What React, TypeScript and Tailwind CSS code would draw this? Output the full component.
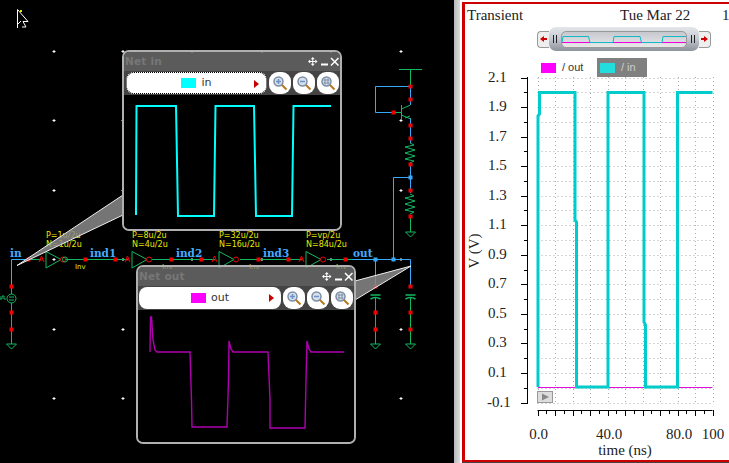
import React from 'react';

const GREEN = '#10b860';
const BLUE = '#38a8f8';
const RED = '#f00000';

const gridX = [54, 123, 192, 262, 331, 401];
const gridY = [51, 120, 190, 259, 329, 398];

const redSquares: [number, number][] = [
  [28, 259], [85, 259], [115, 259], [171, 259], [201, 259], [258, 259], [288, 259], [345, 259],
  [11, 286], [11, 312], [11, 329],
  [375, 312], [375, 329], [375, 286], [410, 286], [410, 312], [410, 329],
  [410, 86], [410, 99], [393, 112], [410, 125], [410, 138], [410, 164], [410, 190], [410, 216],
];

const Ground = ({ x, y }: { x: number; y: number }) => (
  <polygon points={`${x - 5},${y} ${x + 5},${y} ${x},${y + 5}`} fill="none" stroke={GREEN} />
);

const Resistor = ({ x, y }: { x: number; y: number }) => (
  <polyline
    points={`${x},${y} ${x + 4},${y + 2} ${x - 5},${y + 4} ${x + 5},${y + 7} ${x - 5},${y + 10} ${x + 5},${y + 13} ${x - 5},${y + 16} ${x + 4},${y + 18} ${x},${y + 20}`}
    fill="none"
    stroke={GREEN}
  />
);

const Cap = ({ x, y }: { x: number; y: number }) => (
  <g fill="none" stroke={GREEN}>
    <path d={`M${x - 5} ${y}h10`} strokeWidth={1.5} />
    <path d={`M${x - 5} ${y + 4}q5 -3 10 0`} strokeWidth={1.5} />
  </g>
);

const Inverter = ({ x, p, n, inv }: { x: number; p: string; n: string; inv: number }) => (
  <g>
    <polygon points={`${x},${251.5} ${x},${268} ${x + 15},${259.5}`} fill="none" stroke={GREEN} />
    <circle cx={x + 17} cy={259.5} r={2.5} fill="none" stroke={RED} />
    <path d={`M${x - 7} 262l2.5 -6l2.5 6M${x - 6} 260h3`} stroke={RED} fill="none" />
    <text x={x} y={238} fontSize={8} fill="#e8e800" fontFamily="'DejaVu Sans', sans-serif">{p}</text>
    <text x={x} y={247} fontSize={8} fill="#e8e800" fontFamily="'DejaVu Sans', sans-serif">{n}</text>
    <text x={inv} y={269} fontSize={7} fill="#e8e800" fontFamily="'DejaVu Sans', sans-serif">Inv</text>
  </g>
);

const NetLabel = ({ x, children }: { x: number; children: string }) => (
  <text x={x} y={257} fontSize={10.5} fontWeight={700} fill="#44aaff" fontFamily="'DejaVu Serif', serif">
    {children}
  </text>
);

const Schematic = () => (
  <svg className="absolute inset-0" width={454} height={463} viewBox="0 0 454 463">
    {gridX.flatMap((x) =>
      gridY.map((y) => (
        <path key={`${x}-${y}`} d={`M${x - 1.5} ${y + 0.5}h3M${x} ${y - 1}v3`} stroke="#fff" strokeWidth={1} />
      )),
    )}

    {/* wires */}
    <path d="M11.5 259.5H28V259.5M11.5 259.5V286" stroke={BLUE} fill="none" />
    <path d="M28 259.5H41M65 259.5H128M152 259.5H215M240 259.5H302M327 259.5H352" stroke={GREEN} fill="none" />
    <path d="M352 259.5H410.5V286M375.5 259.5V286M393.5 259.5V177.5H410.5" stroke={BLUE} fill="none" />
    <path d="M11.5 286V344M375.5 298V344M410.5 298V344M410.5 69V86" stroke={GREEN} fill="none" />
    <path d="M399 69.5H422" stroke={GREEN} strokeWidth={1} />
    <path d="M375.5 112.5V86.5H410.5V105M375.5 112.5H393M410.5 118V143M410.5 162V193" stroke={BLUE} fill="none" />
    <path d="M393 112.5H401.5M401.5 105V119M401.5 109L410.5 105M401.5 115L410.5 119M405 118L410 116" stroke={GREEN} fill="none" />

    <Resistor x={410} y={143} />
    <Resistor x={410} y={194} />
    <path d="M410.5 216V232" stroke={GREEN} />
    <Ground x={410.5} y={232} />
    <Ground x={11.5} y={344} />
    <Ground x={375.5} y={344} />
    <Ground x={410.5} y={344} />
    <Cap x={375.5} y={295} />
    <Cap x={410.5} y={295} />

    {/* source */}
    <circle cx={11.5} cy={298.5} r={4.5} fill="#000" stroke={GREEN} />
    <path d="M9 297h5M9 300h5M0 296v3h2v-3h2v3h2" stroke={GREEN} fill="none" />

    <Inverter x={46} p="P=1u/2u" n="N=1u/2u" inv={75} />
    <Inverter x={132} p="P=8u/2u" n="N=4u/2u" inv={162} />
    <Inverter x={219} p="P=32u/2u" n="N=16u/2u" inv={249} />
    <Inverter x={306} p="P=vp/2u" n="N=84u/2u" inv={336} />
    <circle cx={65} cy={259.5} r={2.5} fill="none" stroke={GREEN} />

    <NetLabel x={10}>in</NetLabel>
    <NetLabel x={90}>ind1</NetLabel>
    <NetLabel x={176}>ind2</NetLabel>
    <NetLabel x={263}>ind3</NetLabel>
    <NetLabel x={353}>out</NetLabel>

    {redSquares.map(([x, y]) => (
      <rect key={`${x}-${y}`} x={x - 1.5} y={y - 1.5} width={4} height={4} fill={RED} />
    ))}
    <rect x={373.5} y={257.5} width={4} height={4} fill={BLUE} />
    <rect x={391.5} y={257.5} width={4} height={4} fill={BLUE} />
    <rect x={408.5} y={175.5} width={4} height={4} fill={BLUE} />

    {/* callouts */}
    <polygon points="17,265.5 123,195 123,215" fill="#8a8a8a" fillOpacity={0.85} stroke="#eee" />
    <polygon points="411,266 355,281 355,300" fill="#8a8a8a" fillOpacity={0.85} stroke="#eee" />

    {/* pointer */}
    <path d="M17.5 9.5V28M17.5 9.5L28 21.5H23L26 27H22M18 24L21 21" stroke="#fff" fill="none" />
    <rect x={20} y={10} width={2} height={2} fill="#e8e800" />
  </svg>
);

const Magnifier = ({ kind }: { kind: 'in' | 'out' | 'fit' }) => (
  <svg width={16} height={16} viewBox="0 0 16 16">
    <path d="M9.500 9.500L14.500 14.500" stroke="#b5791e" strokeWidth={2} />
    <circle cx={6.5} cy={6.5} r={4.5} fill="#d6e0ec" stroke="#7d8ea4" strokeWidth={1.5} />
    {kind !== 'fit' && <path d="M4 6.500h5" stroke="#6f93c6" strokeWidth={1.6} />}
    {kind === 'in' && <path d="M6.500 4v5" stroke="#6f93c6" strokeWidth={1.6} />}
    {kind === 'fit' && <path d="M3.500 5h6M3.500 8h6M5 3.500v6M8 3.500v6" stroke="#7d8ea4" strokeWidth={1} />}
  </svg>
);

const WindowControls = () => (
  <svg width={31} height={10} viewBox="0 0 31 10">
    <path
      d="M4.750 0l2 2.200h-4zM4.750 9l2-2.200h-4zM0 4.500l2.200-2v4zM9.500 4.500l-2.200-2v4z"
      fill="#fff"
    />
    <path d="M2 4.500h5.500M4.750 2v5" stroke="#fff" />
    <path d="M13 7.500h7" stroke="#fff" strokeWidth={2} />
    <path d="M23 1l7.500 7.500M30.500 1L23 8.500" stroke="#fff" strokeWidth={1.500} />
  </svg>
);

interface NetWindowProps {
  title: string;
  label: string;
  className: string;
  swatch: string;
  pill: string;
  toolbar: string;
  titleBar: string;
  viewBox: string;
  plotWidth: number;
  plotHeight: number;
  children: React.ReactNode;
}

const NetWindow = ({ title, label, className, swatch, pill, toolbar, titleBar, viewBox, plotWidth, plotHeight, children }: NetWindowProps) => (
  <div className={`absolute flex w-[220px] flex-col overflow-hidden rounded-[7px] border-2 border-[#b0b0b0] ${className}`}>
    <div className={`flex shrink-0 items-center justify-between bg-[#767676]/[.77] pl-px pr-[1px] ${titleBar}`}>
      <span className="font-['DejaVu_Sans',sans-serif] text-[10.500px] font-bold text-[#777] tracking-[0.2px]">{title}</span>
      <WindowControls />
    </div>
    <div className={`flex h-[24px] shrink-0 items-center bg-[#444] ${toolbar}`}>
      <div className={`relative flex h-[22px] items-center justify-center gap-[5px] rounded-[8px] bg-white ${pill}`}>
        <span className={`h-[10px] w-[15px] ${swatch}`} />
        <span className="font-['DejaVu_Sans',sans-serif] text-[11px] text-[#333]">{label}</span>
        <svg className="absolute right-[7px] top-[7px]" width={5} height={8} viewBox="0 0 5 8">
          <polygon points="0,0 5,4 0,8" fill="#c80000" />
        </svg>
      </div>
      {(['in', 'out', 'fit'] as const).map((kind) => (
        <div key={kind} className="flex h-[22px] w-[22px] items-center justify-center rounded-[9px] bg-white">
          <Magnifier kind={kind} />
        </div>
      ))}
    </div>
    <div className="flex-1 bg-black">
      <svg width={plotWidth} height={plotHeight} viewBox={viewBox}>
        {children}
      </svg>
    </div>
  </div>
);

const yLabels = ['2.1', '1.9', '1.7', '1.5', '1.3', '1.1', '0.9', '0.7', '0.5', '0.3', '0.1', '-0.1'];
const serif = "'Liberation Serif', serif";

const Chart = () => {
  const y0 = 77.5;
  const step = 29.55;
  const hLines = Array.from({ length: 23 }, (_, i) => y0 + (i * step) / 2);
  const vLines = Array.from({ length: 21 }, (_, i) => 537.5 + i * 8.75);
  return (
    <svg className="overflow-visible" width={264} height={382} viewBox="465 77 264 382">
      {/* grid */}
      {hLines.map((y, i) => (
        <path key={i} d={`M537.5 ${Math.round(y) + 0.5}H712.5`} stroke="#aaa" strokeDasharray="1 3" />
      ))}
      {vLines.map((x, i) =>
        i % 2 === 0 ? <path key={i} d={`M${Math.round(x) + 0.5} 77V402`} stroke="#aaa" strokeDasharray="1 3" /> : null,
      )}

      {/* y axis */}
      <path d="M527.5 77V403" stroke="#000" />
      {hLines.map((y, i) => (
        <path key={i} d={`M${i % 2 === 0 ? 521 : 524} ${Math.round(y) + 0.5}H528`} stroke="#000" />
      ))}
      {yLabels.map((l, i) => (
        <text key={l} x={l === '-0.1' ? 487 : 488} y={y0 + i * step + 4} fontSize={15} fontFamily={serif} fill="#222">
          {l}
        </text>
      ))}
      <text
        x={479}
        y={251}
        fontSize={15}
        fontFamily={serif}
        fill="#222"
        textAnchor="middle"
        transform="rotate(-90 479 251)"
      >
        V (V)
      </text>

      {/* x axis */}
      <path d="M537.5 410.5H712.5" stroke="#000" />
      {vLines.map((x, i) => (
        <path key={i} d={`M${Math.round(x) + 0.5} 410V${i % 2 === 0 ? 416 : 414}`} stroke="#000" />
      ))}
      <text x={538.500} y={439} fontSize={15} fontFamily={serif} fill="#222" textAnchor="middle">0.0</text>
      <text x={609} y={439} fontSize={15} fontFamily={serif} fill="#222" textAnchor="middle">40.0</text>
      <text x={679} y={439} fontSize={15} fontFamily={serif} fill="#222" textAnchor="middle">80.0</text>
      <text x={713} y={439} fontSize={15} fontFamily={serif} fill="#222" textAnchor="middle">100</text>
      <text x={625} y={455} fontSize={15} fontFamily={serif} fill="#222" textAnchor="middle">time (ns)</text>

      {/* traces */}
      <path d="M538 387.500H712.500" stroke="#e010e0" />
      <polyline
        points="538,387 538,116 539.500,114 539.500,92.500 575,92.500 575,220 576.500,222 576.500,387 608,387 608,92.500 644,92.500 644,322 645.500,325 645.500,387 677.500,387 677.500,92.500 712.500,92.500"
        fill="none"
        stroke="#00cccc"
        strokeWidth={3}
      />

      {/* play button */}
      <rect x={537.500} y={391.500} width={15} height={11} fill="#ddd" stroke="#999" />
      <polygon points="542,393.500 549,397 542,400.500" fill="#888" />
    </svg>
  );
};

const ScrollWidget = () => (
  <div className="ml-[72px] flex h-[24px] w-[174px] items-center">
    <div className="flex h-[17px] w-[12px] items-center justify-center rounded-l-[4px] border border-r-0 border-[#999] bg-[#eee]">
      <svg width={7} height={6} viewBox="0 0 7 6"><path d="M0 3l4-3v2h3v2H4v2z" fill="#d00000" /></svg>
    </div>
    <div className="flex h-[24px] w-[150px] items-center justify-between rounded-[7px] bg-linear-to-b from-[#e4e6ea] via-[#c4c8d0] to-[#8e929c] px-[4px]">
      <span className="h-[8px] w-[4px] border-x border-[#222]" />
      <div className="h-[17px] w-[126px] rounded-[5px] border border-[#999] bg-linear-to-b from-[#c6c8ce] to-[#e8e8ea]">
        <svg width={124} height={15} viewBox="562 31 124 15">
          <path d="M562 41.500H687" stroke="#f000e0" />
          <polyline
            points="562,41.500 563,35.500 588.500,35.500 590,41.500 613,41.500 614,35.500 640,35.500 641.500,41.500 662,41.500 663,35.500 687,35.500"
            fill="none"
            stroke="#10b8c8"
          />
        </svg>
      </div>
      <span className="h-[8px] w-[4px] border-x border-[#222]" />
    </div>
    <div className="flex h-[17px] w-[12px] items-center justify-center rounded-r-[4px] border border-l-0 border-[#999] bg-[#eee]">
      <svg width={7} height={6} viewBox="0 0 7 6"><path d="M7 3L3 0v2H0v2h3v2z" fill="#d00000" /></svg>
    </div>
  </div>
);

function Legend() {
  return (
    <div className="relative z-10 ml-[76px] mt-[7px] flex h-[19px] items-center gap-[6px] font-['Liberation_Sans',sans-serif] text-[11px]">
      <span className="h-[10px] w-[15px] bg-[#ff00ff]" />
      <span className="w-[29px] text-[#333]">/ out</span>
      <div className="flex h-[19px] w-[50px] items-center gap-[6px] bg-[#808080] pl-[3px]">
        <span className="h-[10px] w-[15px] bg-[#22dddd]" />
        <span className="text-[#ccc]">/ in</span>
      </div>
    </div>
  );
}

export default function App() {
  return (
    <div className="flex h-[463px] w-[729px] overflow-hidden bg-white">
      <div className="relative h-full w-[454px] shrink-0 bg-black">
        <Schematic />
        <NetWindow
          title="Net in"
          label="in"
          className="left-[122px] top-[50px] h-[181px]"
          titleBar="h-[19px]"
          toolbar="gap-[2px] pl-[2px]"
          swatch="bg-[#00ffff]"
          pill="w-[141px] border border-dotted border-black"
          viewBox="124 95 216 134"
          plotWidth={216}
          plotHeight={134}
        >
          <polyline
            points="136,215 136.500,106 176,106 178,216 214,216 215.500,106 254,106 256,216 292,216 293.500,106 331,106"
            fill="none"
            stroke="#00ffff"
            strokeWidth={2}
          />
        </NetWindow>
        <NetWindow
          title="Net out"
          label="out"
          className="left-[136px] top-[265px] h-[179px]"
          titleBar="h-[19px]"
          toolbar="gap-[2px] pl-px"
          swatch="bg-[#ff00ff]"
          pill="w-[142px]"
          viewBox="138 310 216 132"
          plotWidth={216}
          plotHeight={132}
        >
          <polyline
            points="150,352 150.500,317 151.500,317 153,340 155,350 157,352 190,352 191.500,400 192,427 227,427 228.500,380 229,341 231,349 233,352 268,352 270,400 270,428 305,428 306,380 307,341 309,349 311,352 344,352"
            fill="none"
            stroke="#b000b0"
            strokeWidth={1.400}
          />
        </NetWindow>
      </div>
      <div className="w-[6px] shrink-0 bg-linear-to-r from-[#b8b8bc] to-[#dcdcdc]" />
      <div className="flex-1 pl-[2px] pt-[2px]">
        <div className="h-[461px] border-b border-[#444]">
          <div className="h-[460px] border-y-2 border-l-[3px] border-[#cc0000]">
            <div className="flex h-[23px] items-center pl-[2px] font-['Liberation_Serif',serif] text-[15px] leading-none text-[#222]">
              <span className="w-[153px]">Transient</span>
              <span className="w-[102px]">Tue Mar 22</span>
              <span>1</span>
            </div>
            <ScrollWidget />
            <Legend />
            <Chart />
          </div>
        </div>
      </div>
    </div>
  );
}
